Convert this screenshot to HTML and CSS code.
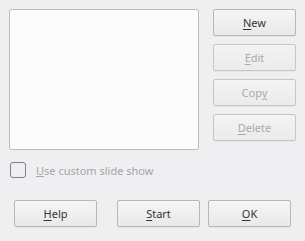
FILE: index.html
```html
<!DOCTYPE html>
<html lang="en">
<head>
    <meta charset="UTF-8">
    <title>Custom Slide Shows</title>
    <link rel="stylesheet" href="styles.css">
</head>
<body>
    <div class="dialogo">
        <div class="topo">
            <div class="lista"></div>
            <div class="botoes">
                <button class="btn"><u>N</u>ew</button>
                <button class="btn" disabled><u>E</u>dit</button>
                <button class="btn" disabled>Cop<u>y</u></button>
                <button class="btn" disabled><u>D</u>elete</button>
            </div>
        </div>

        <label class="opcao">
            <span class="caixa"></span>
            <span class="opcao_texto"><u>U</u>se custom slide show</span>
        </label>

        <div class="rodape">
            <button class="btn"><u>H</u>elp</button>
            <button class="btn btn_start"><u>S</u>tart</button>
            <button class="btn"><u>O</u>K</button>
        </div>
    </div>
</body>
</html>
```

FILE: styles.css
```css
body{
    margin: 0;
    padding: 0;
    background-color: #efeff1;
    font-family: "Noto Sans", "Open Sans", sans-serif;
    font-size: 11px;
}

.dialogo{
    width: 305px;
    height: 241px;
    padding-top: 9px;
    box-sizing: border-box;
}

.topo{
    display: flex;
    padding-left: 9px;
}

.lista{
    width: 190px;
    height: 141px;
    box-sizing: border-box;
    background-color: #fcfcfc;
    border: 1px solid #bcbcbc;
    border-radius: 2px;
}

.botoes{
    display: flex;
    flex-direction: column;
    gap: 8px;
    margin-left: 14px;
}

.btn{
    width: 83px;
    height: 27px;
    padding: 0;
    box-sizing: border-box;
    font-family: inherit;
    font-size: 11px;
    color: #31363b;
    background: linear-gradient(#f5f5f5, #e9e9ea);
    border: 1px solid #b7b7b8;
    border-radius: 2px;
    box-shadow: 0 1px 0 rgba(0, 0, 0, 0.04);
}

.btn:disabled{
    color: #a8aaac;
    background: linear-gradient(#f3f3f4, #ebebec);
    border-color: #c6c6c7;
}

.btn u{
    text-underline-offset: 2px;
}

.opcao{
    display: flex;
    align-items: center;
    margin-top: 12px;
    padding-left: 10px;
    height: 16px;
    color: #a3a5a7;
}

.caixa{
    width: 16px;
    height: 16px;
    box-sizing: border-box;
    border: 1px solid #7f8184;
    border-radius: 3px;
    background-color: #eeeff1;
}

.opcao_texto{
    margin-left: 10px;
}

.rodape{
    display: flex;
    margin-top: 22px;
    padding-left: 14px;
    gap: 8px;
}

.btn_start{
    margin-left: 12px;
}
```
